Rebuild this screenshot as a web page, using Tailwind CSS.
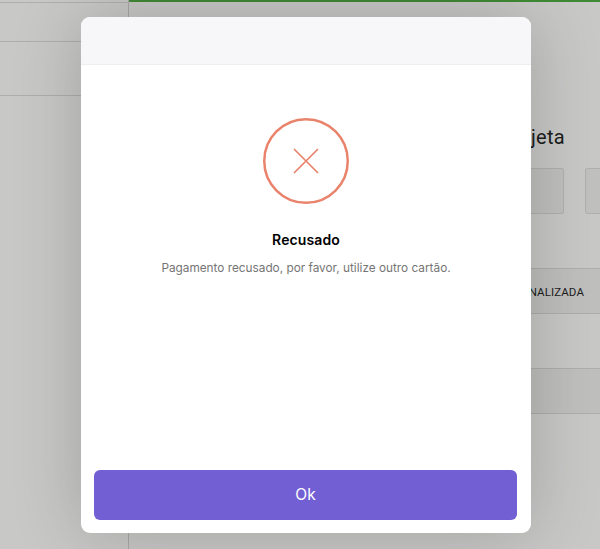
<!DOCTYPE html>
<html lang="pt">
<head>
<meta charset="utf-8">
<script src="https://cdn.jsdelivr.net/npm/@tailwindcss/browser@4"></script>
</head>
<body class="m-0">
<div class="relative flex h-[549px] w-[600px] overflow-hidden bg-[#c8c9c7] font-['Roboto',sans-serif] text-[#1c1c1c]">
  <aside class="flex w-[129px] shrink-0 flex-col border-r border-[#a9aaa8]">
    <div class="h-[3px] border-b border-[#b0b1af]"></div>
    <div class="mt-[38px] h-[55px] border-y border-[#aeafad]"></div>
  </aside>
  <main class="flex min-w-0 flex-1 flex-col">
    <div class="h-[2px] bg-[#3f8a35]"></div>
    <div class="mt-[123px] flex h-[24px] items-center pl-[402px] text-[20px] leading-none tracking-[0.3px]">jeta</div>
    <div class="mt-[19px] flex gap-[21px] pl-[300px]">
      <div class="h-[46px] w-[135px] shrink-0 rounded-[2px] border border-[#b0b1af] bg-[#c0c1bf]"></div>
      <div class="h-[46px] w-[60px] shrink-0 rounded-[2px] border border-[#b0b1af] bg-[#c0c1bf]"></div>
    </div>
    <div class="mt-[54px] flex h-[46px] items-center justify-end border-y border-[#aeafad] bg-[#bfc0be] pt-[3px] pr-[16px] text-[11.5px] tracking-[0.1px]">NALIZADA</div>
    <div class="mt-[54px] h-[46px] border-y border-[#aeafad] bg-[#bfc0be]"></div>
  </main>

  <div class="absolute top-[17px] left-[81px] flex h-[516px] w-[450px] flex-col overflow-hidden rounded-[9px] bg-white shadow-[0_0_70px_rgba(0,0,0,0.2)] font-['Inter',sans-serif]">
    <div class="h-[48px] shrink-0 border-b border-[#eeeef0] bg-[#f7f7f9]"></div>
    <div class="flex flex-1 flex-col items-center">
      <svg class="mt-[53px] block" width="86" height="86" viewBox="0 0 86 86" fill="none" stroke="#e9836b">
        <circle cx="43" cy="43" r="41.75" stroke-width="2.5"/>
        <path d="M31 31 L55 55 M55 31 L31 55" stroke-width="1.75"/>
      </svg>
      <h2 class="mt-[26px] text-[14px] leading-[20px] font-semibold tracking-[0.1px] text-black">Recusado</h2>
      <p class="mt-[8px] text-[11.8px] leading-[20px] text-[#757575]">Pagamento recusado, por favor, utilize outro cartão.</p>
    </div>
    <div class="pr-[14px] pb-[13px] pl-[13px]">
      <button class="flex h-[50px] w-full items-center justify-center rounded-[6px] bg-[#725fd3] text-[15.5px] font-normal text-white">Ok</button>
    </div>
  </div>
</div>
</body>
</html>
